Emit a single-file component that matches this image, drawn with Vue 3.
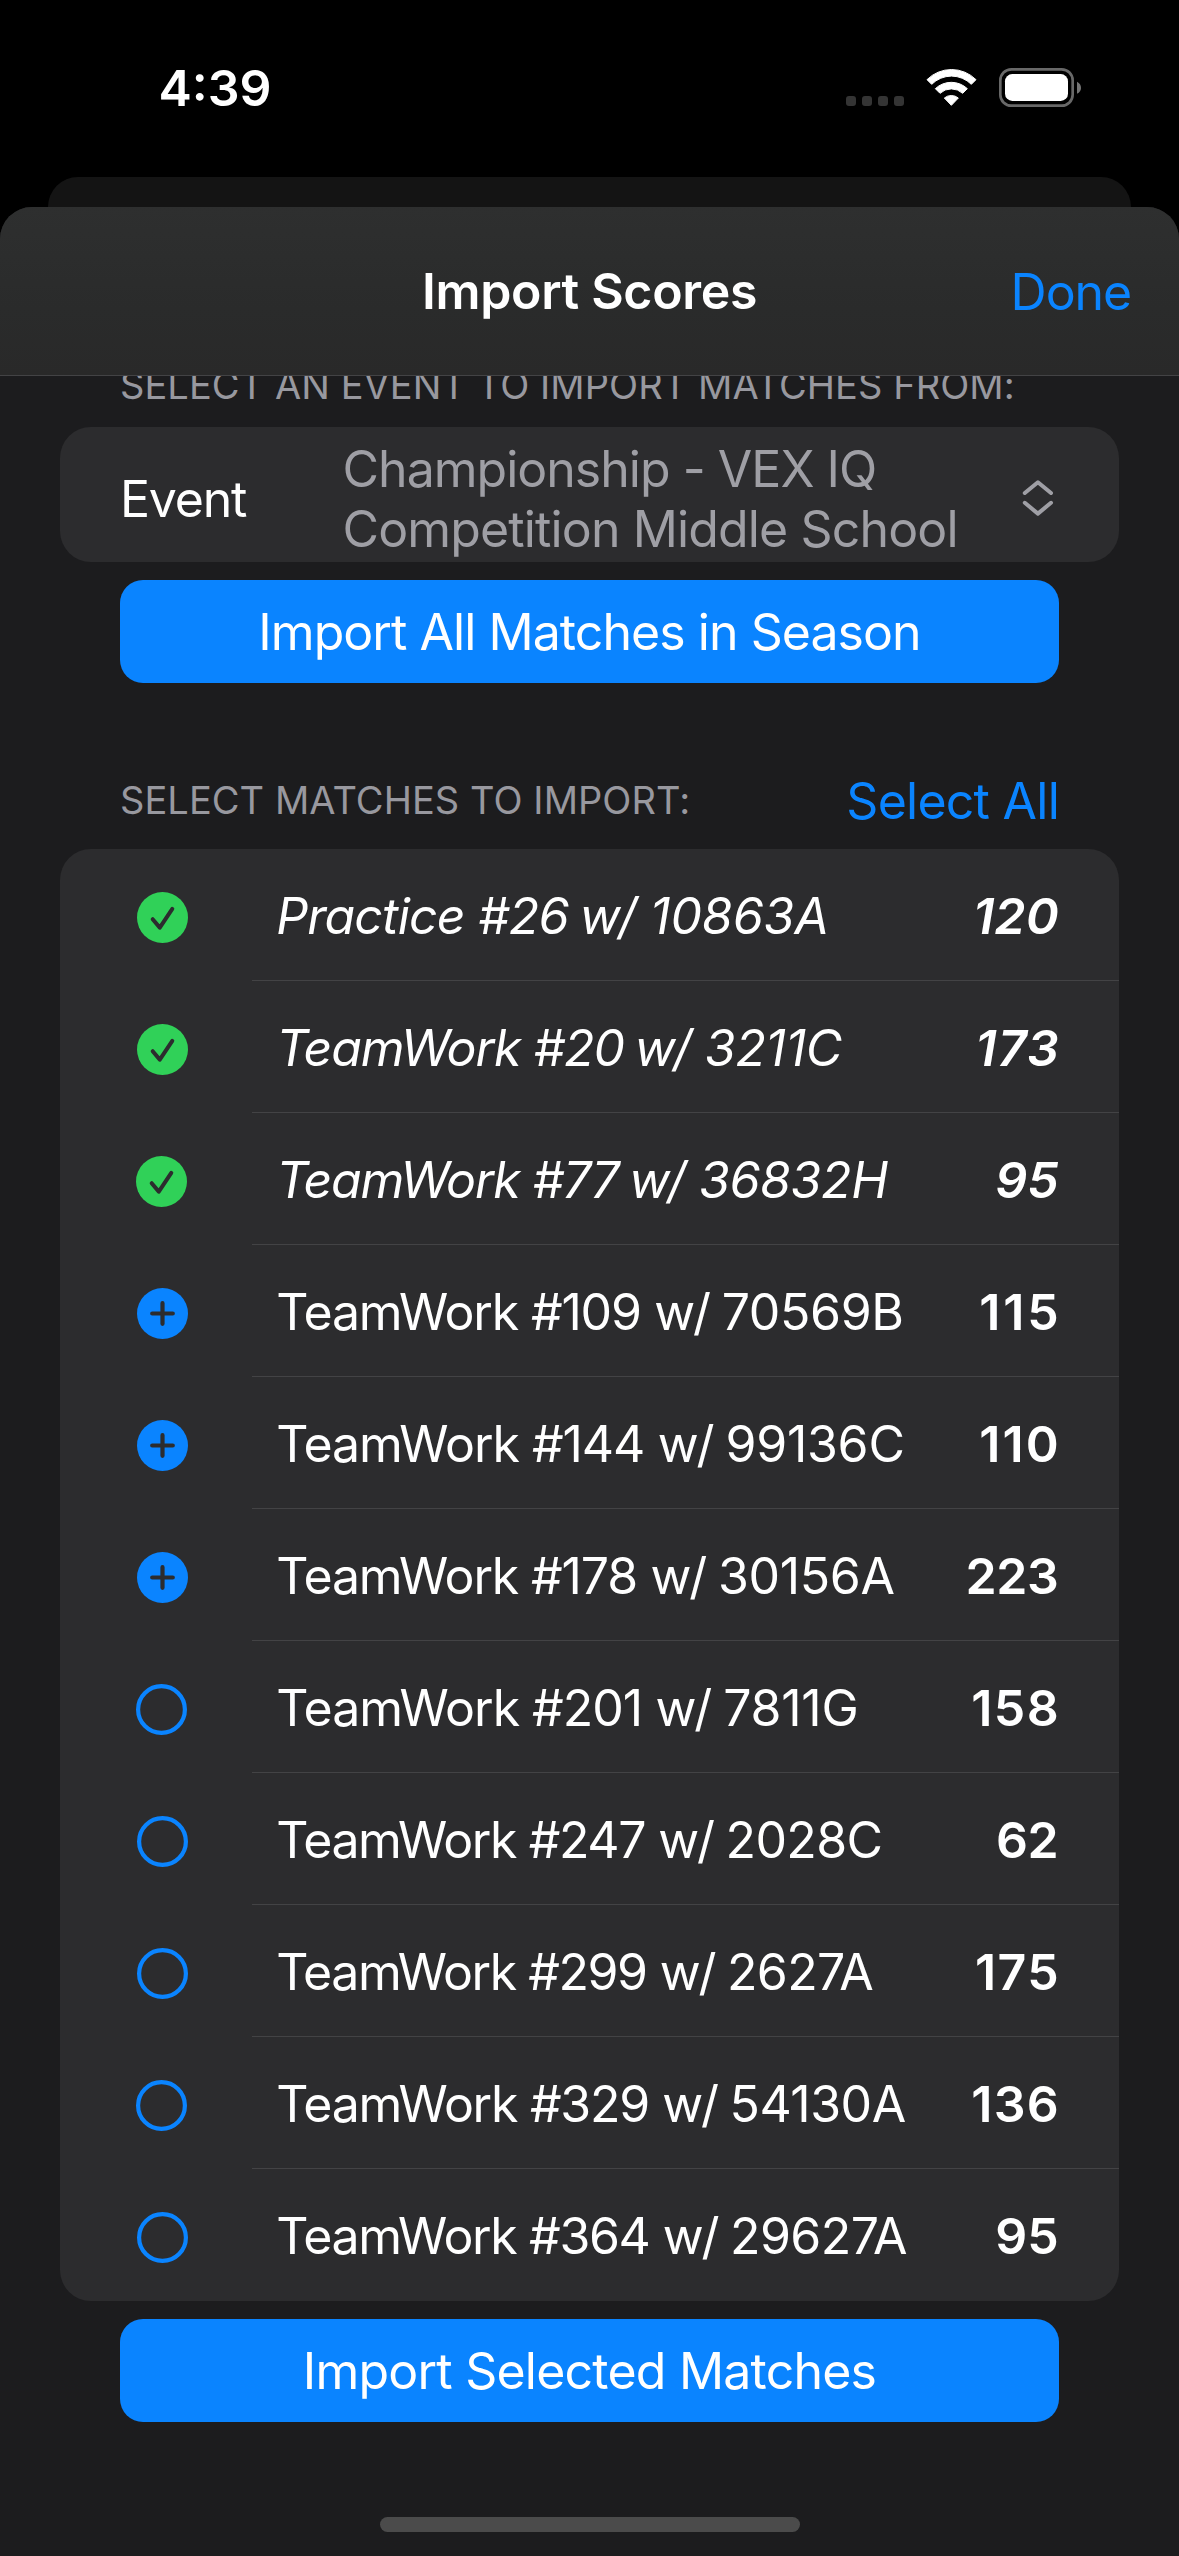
<script setup>
import { reactive } from 'vue'

// `track` values are letter-spacing in px for the name and the score
const matches = reactive([
  { name: 'Practice #26', team: '10863A', score: '120', state: 'imported', track: [-0.83, 0.2] },
  { name: 'TeamWork #20', team: '3211C', score: '173', state: 'imported', track: [-1.09, 1.2] },
  { name: 'TeamWork #77', team: '36832H', score: '95', state: 'imported', track: [-1.19, 0] },
  { name: 'TeamWork #109', team: '70569B', score: '115', state: 'add', track: [-1.16, 2.8] },
  { name: 'TeamWork #144', team: '99136C', score: '110', state: 'add', track: [-1.05, 2.1] },
  { name: 'TeamWork #178', team: '30156A', score: '223', state: 'add', track: [-1.14, -0.4] },
  { name: 'TeamWork #201', team: '7811G', score: '158', state: 'open', track: [-1.03, 1.4] },
  { name: 'TeamWork #247', team: '2028C', score: '62', state: 'open', track: [-1.4, -0.4] },
  { name: 'TeamWork #299', team: '2627A', score: '175', state: 'open', track: [-1.45, 1.4] },
  { name: 'TeamWork #329', team: '54130A', score: '136', state: 'open', track: [-1.27, 1.2] },
  { name: 'TeamWork #364', team: '29627A', score: '95', state: 'open', track: [-1.36, 0] },
])

function toggle(match) {
  if (match.state === 'imported') return
  match.state = match.state === 'add' ? 'open' : 'add'
}

function selectAll() {
  matches.forEach((m) => {
    if (m.state === 'open') m.state = 'add'
  })
}
</script>

<template>
  <div class="screen">
    <div class="status">
      <span class="time">4:39</span>
      <div class="indicators">
        <svg class="signal" viewBox="0 0 174 30">
          <rect v-for="i in 4" :key="i" :x="(i - 1) * 48" y="0" width="30" height="30" rx="9" fill="#343434" />
        </svg>
        <svg class="wifi" viewBox="258 39 156 117" fill="#fff" stroke="#fff" stroke-width="3" stroke-linejoin="round">
          <path d="M261 74 A104 104 0 0 1 408 74 L394 88 A84 84 0 0 0 275 88 Z" />
          <path d="M286 101 A70 70 0 0 1 382 101 L368 115 A50 50 0 0 0 300 115 Z" />
          <path d="M313 129 A33 33 0 0 1 355 129 L334 151 Z" />
        </svg>
        <svg class="battery" viewBox="477 39 246 117">
          <rect x="481" y="43" width="217" height="109" rx="33" fill="none" stroke="#686868" stroke-width="8" />
          <rect x="495" y="57" width="189" height="81" rx="22" fill="#fff" />
          <path d="M711 80 Q723 86 723 98 Q723 110 711 116 Z" fill="#757575" />
        </svg>
      </div>
    </div>

    <div class="behind"></div>

    <div class="sheet">
      <header class="nav">
        <span></span>
        <h1>Import Scores</h1>
        <a class="done">Done</a>
      </header>

      <main>
        <h2 class="label first">SELECT AN EVENT TO IMPORT MATCHES FROM:</h2>
        <div class="card event">
          <span class="event-name">Event</span>
          <div class="event-value">
            <div class="l1">2025 VEX Robotics World</div>
            <div class="l2">Championship - VEX IQ</div>
            <div class="l3">Competition Middle School</div>
          </div>
          <svg class="chevrons" viewBox="0 0 32 38" fill="none" stroke="#9f9fa5" stroke-width="4" stroke-linecap="round" stroke-linejoin="round">
            <path d="M2.8 14 L15.9 3.2 L29 14 M2.8 23.8 L15.9 34.6 L29 23.8" />
          </svg>
        </div>
        <button class="primary all">Import All Matches in Season</button>

        <div class="section-head">
          <h2 class="label">SELECT MATCHES TO IMPORT:</h2>
          <a class="select-all" @click="selectAll">Select All</a>
        </div>

        <ul class="card list">
          <li v-for="m in matches" :key="m.name" :class="m.state" @click="toggle(m)">
            <svg class="mark" viewBox="0 0 51 51" fill="none" stroke-linecap="round" stroke-linejoin="round">
              <template v-if="m.state === 'imported'">
                <circle cx="25.5" cy="25.5" r="25.5" fill="#30d158" />
                <path d="M15.7 27.2 L22.8 35.6 L35.3 16.8" stroke="#2c2c2e" stroke-width="4" />
              </template>
              <template v-else-if="m.state === 'add'">
                <circle cx="25.5" cy="25.5" r="25.5" fill="#0a84ff" />
                <path d="M15.2 25.5 H35.8 M25.5 15.2 V35.8" stroke="#2c2c2e" stroke-width="4.2" />
              </template>
              <circle v-else cx="25.5" cy="25.5" r="23.4" stroke="#0a84ff" stroke-width="4.2" />
            </svg>
            <div class="body">
              <span class="name" :style="{ letterSpacing: m.track[0] + 'px' }">{{ m.name }} <span class="with">w/</span> <span :style="{ letterSpacing: m.track[0] + 0.8 + 'px' }">{{ m.team }}</span></span>
              <span class="score" :style="{ letterSpacing: m.track[1] + 'px', marginRight: -m.track[1] + 'px' }">{{ m.score }}</span>
            </div>
          </li>
        </ul>
        <button class="primary selected">Import Selected Matches</button>
      </main>

      <div class="home-bar"></div>
    </div>
  </div>
</template>

<style>
body {
  background: #000;
}
</style>

<style scoped>
.screen {
  width: 1179px;
  height: 2556px;
  display: flex;
  flex-direction: column;
  background: #000;
  color: #fff;
  font: 400 50px/60px Inter, 'Liberation Sans', sans-serif;
  white-space: nowrap;
  overflow: hidden;
}
.status {
  height: 177px;
  flex: none;
  box-sizing: border-box;
  padding: 58px 98px 0 158.5px;
  display: flex;
  justify-content: space-between;
  align-items: flex-start;
}
.time {
  font-weight: 600;
}
.indicators {
  display: flex;
  align-items: flex-end;
  padding-top: 10px;
}
.signal {
  width: 58px;
  height: 10px;
  margin: 0 22px 1px 0;
}
.wifi {
  width: 52px;
  height: 39px;
  margin-right: 21px;
}
.battery {
  width: 82px;
  height: 39px;
}
.behind {
  flex: none;
  height: 30px;
  margin: 0 48px;
  border-radius: 30px 30px 0 0;
  background: #141414;
}
.sheet {
  flex: 1;
  min-height: 0;
  display: flex;
  flex-direction: column;
  background: #1c1c1e;
  border-radius: 32px 32px 0 0;
  overflow: hidden;
}
.nav {
  flex: none;
  box-sizing: border-box;
  height: 169px;
  border-bottom: 1px solid #434345;
  background: linear-gradient(#2e2f2f, #2a2b2b 60%, #292929);
  display: grid;
  grid-template-columns: 1fr auto 1fr;
  align-items: center;
}
h1 {
  margin: 0;
  font-size: 50px;
  font-weight: 600;
  letter-spacing: -0.33px;
}
.done {
  justify-self: end;
  margin: 2px 47.8px 0 0;
  color: #0a84ff;
  letter-spacing: -1.04px;
}
main {
  flex: 1;
  min-height: 0;
  padding: 0 60px;
  overflow: hidden;
  display: flex;
  flex-direction: column;
}
.label {
  margin: 0;
  font-size: 38px;
  line-height: 46px;
  font-weight: 400;
  letter-spacing: 0.06px;
  color: #98989f;
}
.first {
  margin: -14px 0 19px 60px;
}
.card {
  flex: none;
  background: #2c2c2e;
  border-radius: 31px;
  overflow: hidden;
}
.event {
  height: 135px;
  display: flex;
  align-items: flex-start;
  padding: 0 65px 0 60px;
}
.event-name {
  width: 222.5px;
  margin-top: 42px;
  letter-spacing: -1.2px;
}
.event-value {
  flex: 1;
  margin-top: -48px;
  color: #9f9fa5;
}
.l1 {
  letter-spacing: -0.9px;
  transform: translateY(0.3px);
}
.l2 {
  letter-spacing: -0.98px;
}
.l3 {
  letter-spacing: -0.86px;
}
.chevrons {
  width: 32px;
  height: 38px;
  margin-top: 52px;
}
.primary {
  flex: none;
  height: 103px;
  margin: 18px 60px 0;
  padding: 0;
  border: 0;
  border-radius: 23px;
  background: #0a84ff;
  color: #fff;
  font: inherit;
}
.all {
  letter-spacing: -0.95px;
}
.selected {
  letter-spacing: -0.78px;
  padding-top: 1px;
}
.section-head {
  flex: none;
  height: 60px;
  margin: 88px 60px 18px;
  display: flex;
  justify-content: space-between;
  align-items: center;
}
.section-head .label {
  margin-top: -2px;
}
.select-all {
  color: #0a84ff;
  letter-spacing: -0.75px;
}
.list {
  margin: 0;
  padding: 0;
  list-style: none;
}
li {
  height: 132px;
  display: flex;
  align-items: center;
}
.mark {
  flex: none;
  width: 51px;
  height: 51px;
  margin: 5px 64px 0 77px;
}
li:nth-child(3) .mark,
li:nth-child(7) .mark,
li:nth-child(10) .mark {
  margin-left: 76px;
  margin-right: 65px;
}
.body {
  flex: 1;
  box-sizing: border-box;
  height: 132px;
  padding: 3px 60.3px 0 24.2px;
  border-bottom: 1px solid #434345;
  display: flex;
  justify-content: space-between;
  align-items: center;
}
li:last-child .body {
  border-bottom-color: transparent;
}
.with {
  margin-left: 0.5px;
  letter-spacing: -2.2px;
}
.imported .with {
  margin-left: -2px;
  margin-right: 2.5px;
}
.score {
  font-weight: 600;
}
.imported .body {
  font-style: italic;
}
.home-bar {
  flex: none;
  width: 420px;
  height: 15px;
  margin: 0 auto 24px;
  border-radius: 8px;
  background: #4b4b4b;
}
</style>
